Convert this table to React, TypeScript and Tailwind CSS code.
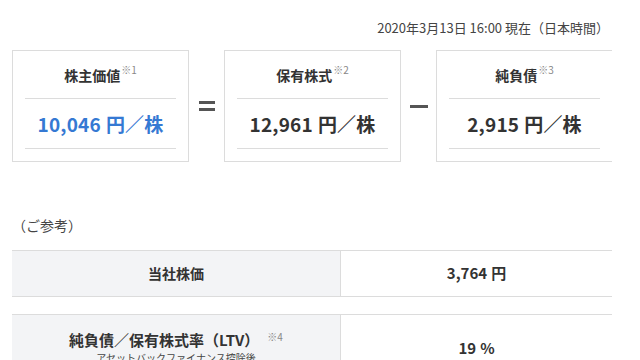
import React from "react";

const FONT = { fontFamily: '"Noto Sans CJK JP", "Noto Sans", sans-serif' };

function Box({ title, note, num, blue }: { title: string; note: string; num: string; blue?: boolean }) {
  return (
    <div className="w-[177px] shrink-0 border border-[#dcdcdc] bg-white px-3 pb-3">
      <div className="flex h-[48px] items-center justify-center border-b border-[#dcdcdc]">
        <span className="text-[14px] font-bold leading-none text-[#333]">{title}</span>
        <span className="relative -top-[5px] ml-[1px] text-[10px] leading-none text-[#888]">{note}</span>
      </div>
      <div className="flex h-[50px] items-center justify-center border-b border-[#dcdcdc]">
        <span className={`text-[19px] font-bold leading-none tracking-[0.2px] ${blue ? "text-[#3579d3]" : "text-[#333]"}`}>
          {num}
          <span className="ml-[5px]">円／株</span>
        </span>
      </div>
    </div>
  );
}

export default function App() {
  return (
    <div className="h-[360px] w-[640px] overflow-hidden bg-white" style={FONT}>
      <div className="ml-[12px] w-[600px] overflow-hidden">
        <div className="flex h-[50px] items-center justify-end pt-[6px] pr-[3px] text-[13px] text-[#444]">
          2020年3月13日 16:00 現在（日本時間）
        </div>
        <div className="flex w-[601px] items-center">
          <Box title="株主価値" note="※1" num="10,046" blue />
          <div className="flex w-[35px] shrink-0 flex-col items-center justify-center gap-[4px]">
            <div className="h-[3px] w-[16px] bg-[#555]" />
            <div className="h-[3px] w-[16px] bg-[#555]" />
          </div>
          <Box title="保有株式" note="※2" num="12,961" />
          <div className="flex w-[35px] shrink-0 items-center justify-center">
            <div className="h-[3px] w-[18px] bg-[#555]" />
          </div>
          <Box title="純負債" note="※3" num="2,915" />
        </div>
        <div className="flex h-[88px] items-center pt-[38px] text-[14px] text-[#444]">（ご参考）</div>
        <div className="flex h-[47px] border-y border-[#dcdcdc]">
          <div className="flex w-[329px] items-center justify-center border-r border-[#dcdcdc] bg-[#f3f4f6] text-[14px] font-bold text-[#333]">
            当社株価
          </div>
          <div className="flex flex-1 items-center justify-center text-[15px] font-bold text-[#333]">
            3,764<span className="ml-[4px]">円</span>
          </div>
        </div>
        <div className="mt-[17px] flex h-[70px] border-t border-[#dcdcdc]">
          <div className="flex w-[329px] flex-col items-center border-r border-[#dcdcdc] bg-[#f3f4f6] pt-[15px]">
            <div className="flex items-start leading-[20px]">
              <span className="text-[15px] font-bold text-[#333]">純負債／保有株式率（LTV）</span>
              <span className="ml-[8px] text-[10px] leading-[14px] text-[#888]">※4</span>
            </div>
            <div className="mt-[1px] text-[10px] leading-[14px] text-[#444]">アセットバックファイナンス控除後</div>
          </div>
          <div className="flex flex-1 items-start justify-center pt-[22px] text-[15px] font-bold text-[#333]">
            19<span className="ml-[4px]">%</span>
          </div>
        </div>
      </div>
    </div>
  );
}
